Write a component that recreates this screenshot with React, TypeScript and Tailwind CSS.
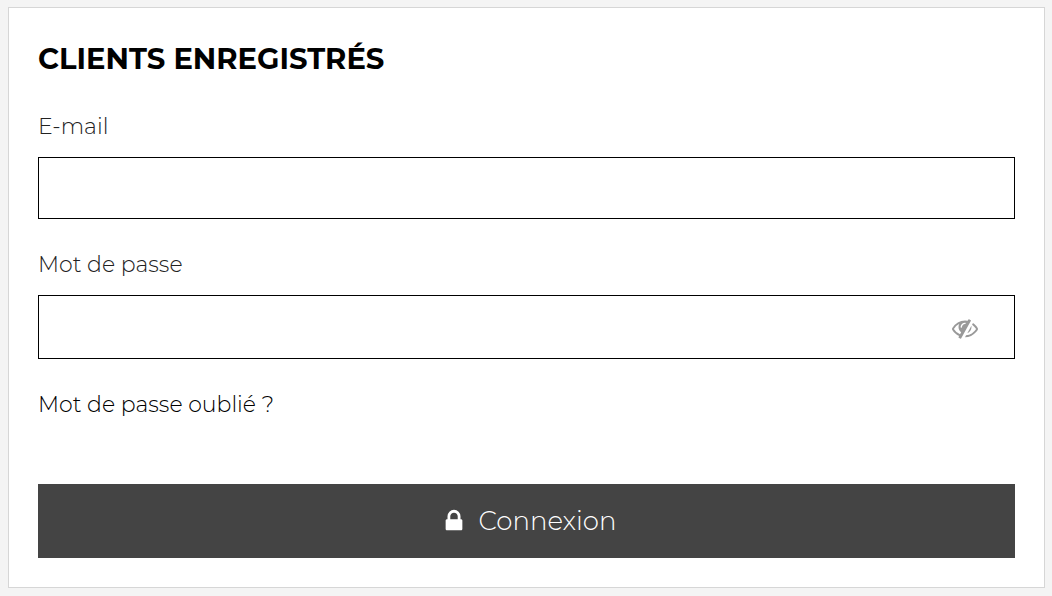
import { useState } from "react";

function EyeSlashIcon() {
  return (
    <svg viewBox="0 0 1792 1792" className="size-[26px]" fill="currentColor" aria-hidden="true">
      <path d="M555 1335l78-141q-87-63-136-159t-49-203q0-121 61-225-229 117-381 353 167 258 427 375zm389-759q0-20-14-34t-34-14q-125 0-214.5 89.5t-89.5 214.5q0 20 14 34t34 14 34-14 14-34q0-86 61-147t147-61q20 0 34-14t14-34zm363-191q0 7-1 9-106 189-316 567t-315 566l-49 89q-10 16-28 16-12 0-134-70-16-10-16-28 0-12 44-87-143-65-263.5-173t-208.5-245q-20-31-20-69t20-69q153-235 380-371t496-136q89 0 180 17l54-97q10-16 28-16 5 0 18 6t31 15.5 33 18.5 31.5 18.5 19.5 11.5q16 10 16 27zm37 447q0 139-79 253.5t-209 164.5l280-502q8 45 8 84zm448 128q0 35-20 69-39 64-109 145-150 172-347.5 267t-419.5 95l74-132q212-18 392.5-137t301.5-307q-115-179-282-294l63-112q95 64 182.5 153t144.5 184q20 34 20 69z" />
    </svg>
  );
}

function LockIcon() {
  return (
    <svg viewBox="0 0 1792 1792" className="size-[26px]" fill="currentColor" aria-hidden="true">
      <path d="M640 768h512v-192q0-106-75-181t-181-75-181 75-75 181v192zm832 96v576q0 40-28 68t-68 28h-960q-40 0-68-28t-28-68v-576q0-40 28-68t68-28h32v-192q0-184 132-316t316-132 316 132 132 316v192h32q40 0 68 28t28 68z" />
    </svg>
  );
}

export default function App() {
  const [email, setEmail] = useState("");
  const [password, setPassword] = useState("");
  const [visible, setVisible] = useState(false);

  return (
    <main className="min-h-screen bg-[#f4f4f4] py-[7px] pr-[7px] pl-2 font-[Montserrat,Inter,sans-serif]">
      <section className="border border-[#d6d6d6] bg-white px-[29px] pt-[31px] pb-[29px]">
        <h1 className="text-[29px] leading-10 font-bold text-black uppercase">
          Clients enregistrés
        </h1>
        <form className="mt-8" onSubmit={(e) => e.preventDefault()}>
          <label htmlFor="email" className="block text-[22px] leading-8 font-[350] text-[#222]">
            E-mail
          </label>
          <input
            id="email"
            type="email"
            value={email}
            onChange={(e) => setEmail(e.target.value)}
            className="mt-3.5 block h-[62px] w-full border border-black bg-white px-5 text-[22px] outline-none"
          />

          <label
            htmlFor="password"
            className="mt-[30px] block text-[22px] leading-8 font-[350] text-[#222]"
          >
            Mot de passe
          </label>
          <div className="mt-3.5 flex h-16 items-center border border-black bg-white pr-9">
            <input
              id="password"
              type={visible ? "text" : "password"}
              value={password}
              onChange={(e) => setPassword(e.target.value)}
              className="h-full min-w-0 flex-1 px-5 text-[22px] outline-none"
            />
            <button
              type="button"
              aria-label="Afficher le mot de passe"
              onClick={() => setVisible(!visible)}
              className="pt-0.5 text-[#999]"
            >
              <EyeSlashIcon />
            </button>
          </div>

          <a href="#" className="mt-[30px] block w-fit text-[22px] leading-8 font-[350] text-black">
            Mot de passe oublié ?
          </a>

          <button
            type="submit"
            className="mt-[63px] flex h-[74px] w-full items-center justify-center gap-3 bg-[#444] pl-1 text-[26px] font-light text-white"
          >
            <LockIcon />
            Connexion
          </button>
        </form>
      </section>
    </main>
  );
}
